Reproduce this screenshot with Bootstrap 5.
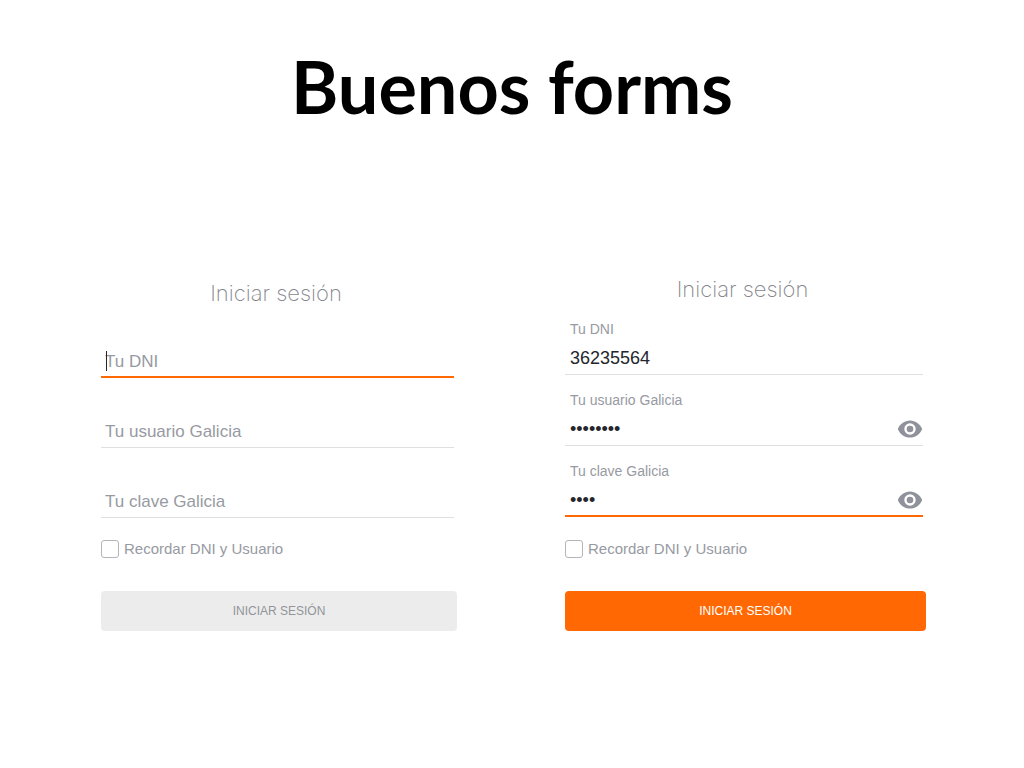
<!DOCTYPE html>
<html lang="es">
<head>
<meta charset="utf-8">
<meta name="viewport" content="width=device-width, initial-scale=1">
<title>Buenos forms</title>
<link href="https://cdn.jsdelivr.net/npm/bootstrap@5.3.0/dist/css/bootstrap.min.css" rel="stylesheet">
<style>
  :root { --accent: #ff6803; --muted: #979aa2; --rule: #dedfe1; }
  body { font-family: "Liberation Sans", Arial, sans-serif; background: #fff; color: var(--muted); }
  .slide-title { font-family: Lato, sans-serif; font-weight: 700; font-size: 72px; line-height: 88px; color: #000; padding: 42px 16px 0; }
  .forms-area { grid-template-columns: 1fr; gap: 48px; padding: 48px 24px; }
  @media (min-width: 768px) {
    .forms-area { grid-template-columns: 356fr 361fr; column-gap: 108px; padding: 145px 98px 48px 101px; }
  }
  .form-title { font-family: Inter, sans-serif; font-weight: 200; font-size: 22px; line-height: 28px; color: #85878d; padding-right: 6px; }
  .field-list { padding-right: 3px; }
  .field-list.roomy { gap: 30px; margin-top: 31px; }
  .field-list.filled { gap: 15px; margin-top: 16px; }
  .line-input { border: 0; border-bottom: 1px solid var(--rule); border-radius: 0; background: transparent; padding: 14px 4px 5px; font-size: 17px; line-height: 20px; height: 40px; color: #24262c; }
  .line-input::placeholder { color: var(--muted); opacity: 1; }
  .line-input:focus { background: transparent; box-shadow: none; border-color: var(--accent); }
  .line-input.active, .line-input.active:focus { border-color: var(--accent); box-shadow: inset 0 -1px var(--accent); }
  .filled .line-input { height: 36px; padding: 9px 5px 6px; font-size: 18px; }
  .filled .with-eye { padding-right: 36px; }
  .field-label { font-size: 14px; line-height: 20px; padding-left: 5px; }
  .text-caret { left: 5px; bottom: 7px; width: 1px; height: 20px; background: #24262c; }
  .eye-btn { right: 0; bottom: 7px; width: 26px; height: 20px; color: #8f929b; }
  .remember { margin-top: 21px; font-size: 15px; line-height: 20px; gap: 5px; }
  .filled + .remember { margin-top: 22px; }
  .remember .form-check-input { width: 18px; height: 18px; border: 1px solid #b4b5ba; border-radius: 3px; }
  .submit-btn { margin-top: 32px; height: 40px; border: 0; border-radius: 4px; font-size: 12px; line-height: 20px; padding: 0; }
  .submit-btn.idle, .submit-btn.idle:disabled { background: #ececec; color: #929499; opacity: 1; }
  .submit-btn.ready, .submit-btn.ready:hover { background: var(--accent); color: #fff; }
</style>
</head>
<body>
<h1 class="slide-title text-center m-0">Buenos forms</h1>
<main class="forms-area d-grid align-items-end">
  <form class="d-flex flex-column">
    <h2 class="form-title text-center m-0">Iniciar sesión</h2>
    <div class="field-list roomy d-flex flex-column">
      <div class="position-relative">
        <input class="form-control line-input active" type="text" placeholder="Tu DNI" aria-label="Tu DNI">
        <span class="text-caret position-absolute"></span>
      </div>
      <input class="form-control line-input" type="text" placeholder="Tu usuario Galicia" aria-label="Tu usuario Galicia">
      <input class="form-control line-input" type="password" placeholder="Tu clave Galicia" aria-label="Tu clave Galicia">
    </div>
    <div class="remember d-flex align-items-center">
      <input class="form-check-input m-0" type="checkbox" id="remember-empty">
      <label for="remember-empty">Recordar DNI y Usuario</label>
    </div>
    <button class="btn submit-btn idle w-100" type="submit" disabled>INICIAR SESIÓN</button>
  </form>

  <form class="d-flex flex-column">
    <h2 class="form-title text-center m-0">Iniciar sesión</h2>
    <div class="field-list filled d-flex flex-column">
      <div>
        <label class="field-label d-block" for="dni">Tu DNI</label>
        <input class="form-control line-input" type="text" id="dni" value="36235564">
      </div>
      <div class="position-relative">
        <label class="field-label d-block" for="usuario">Tu usuario Galicia</label>
        <input class="form-control line-input with-eye" type="password" id="usuario" value="galicia1">
        <button class="eye-btn btn border-0 p-0 position-absolute d-flex align-items-center justify-content-center" type="button" aria-label="Mostrar usuario">
          <svg width="26" height="18" viewBox="0 0 26 18" fill="currentColor" fill-rule="evenodd"><path d="M13 .4C7.500 .4 2.800 3.900.8 9c2 5.100 6.700 8.600 12.200 8.600S23.200 14.100 25.200 9C23.200 3.900 18.500.4 13 .4zM13 3.300a5.700 5.700 0 1 1 0 11.400 5.700 5.700 0 0 1 0-11.400zM13 5.700a3.300 3.300 0 1 0 0 6.600 3.300 3.300 0 0 0 0-6.600z"/></svg>
        </button>
      </div>
      <div class="position-relative">
        <label class="field-label d-block" for="clave">Tu clave Galicia</label>
        <input class="form-control line-input with-eye active" type="password" id="clave" value="1234">
        <button class="eye-btn btn border-0 p-0 position-absolute d-flex align-items-center justify-content-center" type="button" aria-label="Mostrar clave">
          <svg width="26" height="18" viewBox="0 0 26 18" fill="currentColor" fill-rule="evenodd"><path d="M13 .4C7.500 .4 2.800 3.900.8 9c2 5.100 6.700 8.600 12.200 8.600S23.200 14.100 25.200 9C23.200 3.900 18.500.4 13 .4zM13 3.300a5.700 5.700 0 1 1 0 11.400 5.700 5.700 0 0 1 0-11.400zM13 5.700a3.300 3.300 0 1 0 0 6.600 3.300 3.300 0 0 0 0-6.600z"/></svg>
        </button>
      </div>
    </div>
    <div class="remember d-flex align-items-center">
      <input class="form-check-input m-0" type="checkbox" id="remember-filled">
      <label for="remember-filled">Recordar DNI y Usuario</label>
    </div>
    <button class="btn submit-btn ready w-100" type="submit">INICIAR SESIÓN</button>
  </form>
</main>
<script src="https://cdn.jsdelivr.net/npm/bootstrap@5.3.0/dist/js/bootstrap.bundle.min.js"></script>
</body>
</html>
